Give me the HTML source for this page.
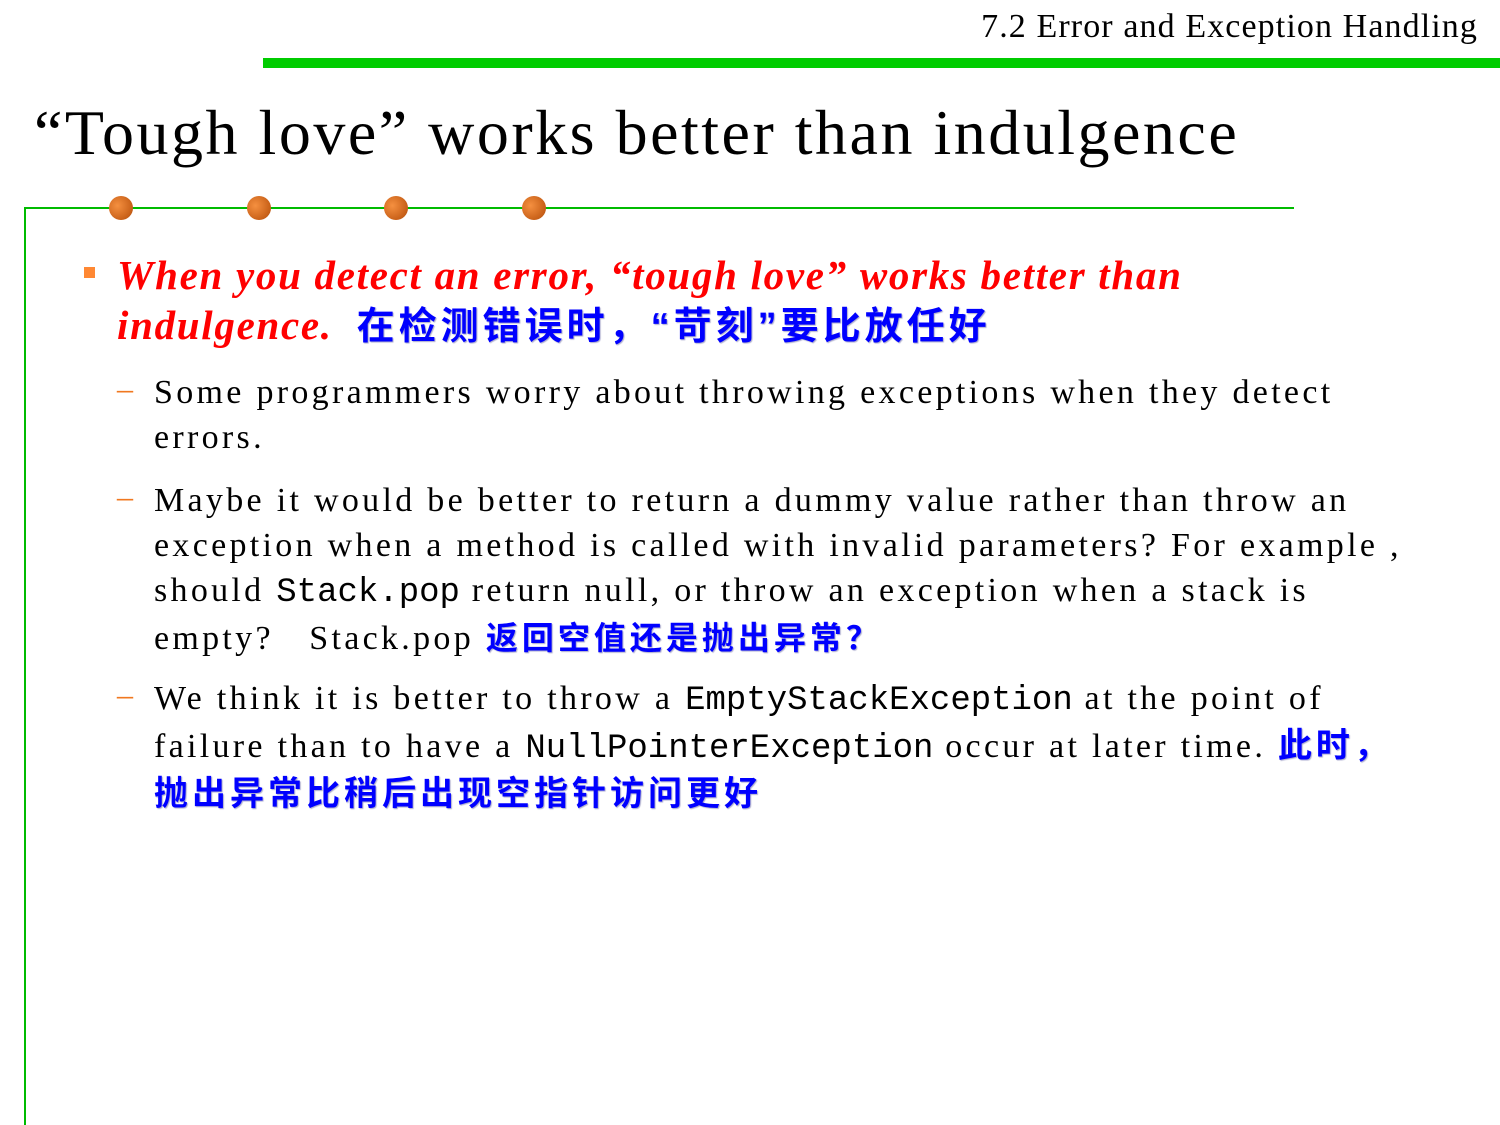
<!DOCTYPE html>
<html><head><meta charset="utf-8"><style>
body{margin:0;width:1500px;height:1125px;background:#fff;position:relative;overflow:hidden;font-family:"Liberation Serif","Noto Serif CJK SC",serif;}
.a{position:absolute;white-space:nowrap;}
.cn{font-family:"Liberation Sans","Noto Sans CJK SC",sans-serif;color:#0000ff;font-weight:bold;font-style:normal;text-shadow:1px 1px 1px #aaaacc;letter-spacing:4px;}
.mono{font-family:"Liberation Mono",monospace;font-size:34px;letter-spacing:0;}
.dot{position:absolute;width:24px;height:24px;border-radius:50%;background:radial-gradient(circle at 35% 40%,#f59040,#c86018 70%,#a04a10);top:196px;}
.t{font-size:34px;color:#000;letter-spacing:3.3px;}
.dash{position:absolute;color:#f07820;font-size:32px;}
</style></head><body>
<div class="a" style="right:22px;top:8px;font-size:34px;letter-spacing:1.1px;">7.2 Error and Exception Handling</div>
<div class="a" style="left:263px;top:58px;width:1237px;height:10px;background:#00cc00"></div>
<div class="a" style="left:34px;top:96px;font-size:64px;letter-spacing:2.5px;">“Tough love” works better than indulgence</div>
<div class="a" style="left:24px;top:207px;width:1270px;height:2px;background:#00bb00"></div>
<div class="a" style="left:24px;top:207px;width:2px;height:918px;background:#00bb00"></div>
<div class="dot" style="left:109px"></div><div class="dot" style="left:247px"></div><div class="dot" style="left:384px"></div><div class="dot" style="left:522px"></div>
<div class="a" style="left:84px;top:267px;width:11px;height:11px;background:#ff8833"></div>
<div class="a" style="left:117px;top:250px;font-size:41px;color:#ff0000;font-style:italic;font-weight:bold;line-height:50px;letter-spacing:1.7px;">When you detect an error, “tough love” works better than<br>indulgence. &nbsp;<span class="cn" style="font-size:38px">在检测错误时，“苛刻”要比放任好</span></div>
<div class="dash" style="left:117px;top:370px;">–</div>
<div class="a t" style="left:154px;top:370px;line-height:45px;">Some programmers worry about throwing exceptions when they detect<br>errors.</div>
<div class="dash" style="left:117px;top:478px;">–</div>
<div class="a t" style="left:154px;top:478px;line-height:45px;">Maybe it would be better to return a dummy value rather than throw an<br>exception when a method is called with invalid parameters? For example ,<br>should <span class="mono">Stack.pop</span> return null, or throw an exception when a stack is<br>empty? &nbsp; Stack.pop <span class="cn" style="font-size:32px">返回空值还是抛出异常？</span></div>
<div class="dash" style="left:117px;top:676px;">–</div>
<div class="a t" style="left:154px;top:676px;line-height:45px;">We think it is better to throw a <span class="mono">EmptyStackException</span> at the point of<br>failure than to have a <span class="mono">NullPointerException</span> occur at later time. <span class="cn" style="font-size:34px">此时，</span><br><span class="cn" style="font-size:34px">抛出异常比稍后出现空指针访问更好</span></div>
</body></html>
